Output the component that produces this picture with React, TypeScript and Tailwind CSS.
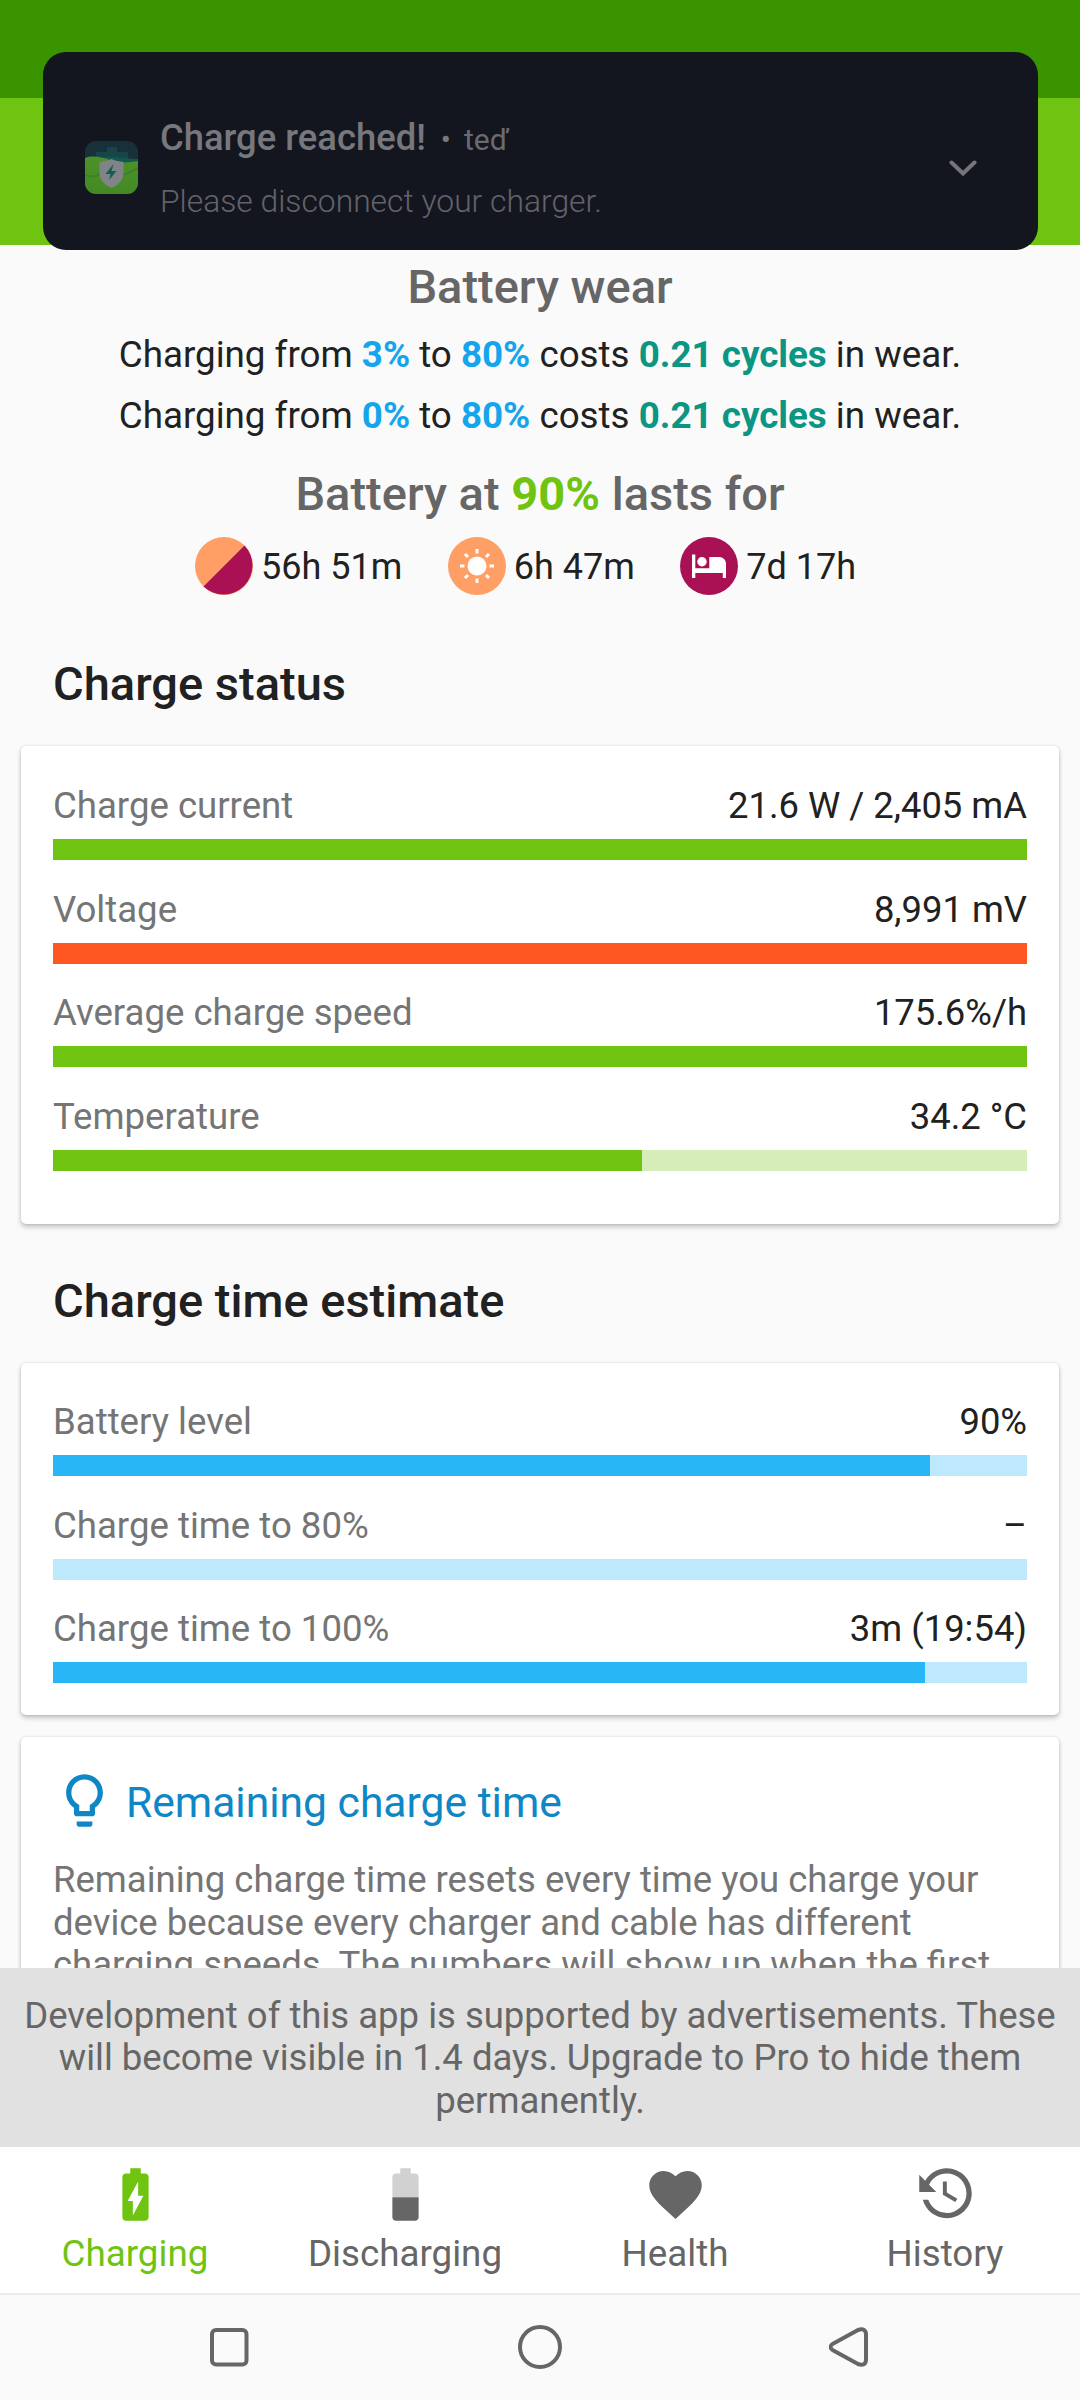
import type { ReactNode } from "react";
import { MdBattery50, MdBatteryChargingFull, MdFavorite, MdLightbulbOutline } from "react-icons/md";

type Stat = {
  label: string;
  value: string;
  percent: number;
  fill: string;
  track: string;
};

const GREEN = { fill: "bg-[#6fc411]", track: "bg-[#d4edb9]" };
const ORANGE = { fill: "bg-[#ff5722]", track: "bg-[#ffccbc]" };
const BLUE = { fill: "bg-[#29b6f6]", track: "bg-[#bee8fb]" };

const chargeStatus: Stat[] = [
  { label: "Charge current", value: "21.6 W / 2,405 mA", percent: 100, ...GREEN },
  { label: "Voltage", value: "8,991 mV", percent: 100, ...ORANGE },
  { label: "Average charge speed", value: "175.6%/h", percent: 100, ...GREEN },
  { label: "Temperature", value: "34.2 °C", percent: 60.5, ...GREEN },
];

const chargeTime: Stat[] = [
  { label: "Battery level", value: "90%", percent: 90, ...BLUE },
  { label: "Charge time to 80%", value: "–", percent: 0, ...BLUE },
  { label: "Charge time to 100%", value: "3m (19:54)", percent: 89.5, ...BLUE },
];

function StatRow({ stat }: { stat: Stat }) {
  return (
    <div>
      <div className="flex justify-between leading-[42px]">
        <span className="text-[36.6px] text-[#757575]">{stat.label}</span>
        <span className="text-[36.4px] text-[#212121]">{stat.value}</span>
      </div>
      <div className={`mt-3 h-[21px] ${stat.track}`}>
        <div className={`h-full ${stat.fill}`} style={{ width: `${stat.percent}%` }} />
      </div>
    </div>
  );
}

function Card({ className, children }: { className: string; children: ReactNode }) {
  return (
    <div
      className={`mx-[21px] rounded-[5px] bg-white px-8 shadow-[0_3px_5px_rgba(0,0,0,0.22),0_0_3px_rgba(0,0,0,0.12)] ${className}`}
    >
      {children}
    </div>
  );
}

function WearLine({ from }: { from: string }) {
  return (
    <p className="text-center text-[36.75px] leading-[42px] text-[#212121]">
      Charging from <b className="font-bold text-[#14a5ec]">{from}</b> to{" "}
      <b className="font-bold text-[#14a5ec]">80%</b> costs{" "}
      <b className="font-bold text-[#0b9583]">0.21 cycles</b> in wear.
    </p>
  );
}

function AppIcon() {
  return (
    <svg className="h-[53px] w-[53px]" viewBox="0 0 53 53">
      <defs>
        <clipPath id="appShape">
          <rect width="53" height="53" rx="11" />
        </clipPath>
        <linearGradient id="appGreen" x1="0" y1="0" x2="0" y2="1">
          <stop offset="0" stopColor="#4c9128" />
          <stop offset="1" stopColor="#448a24" />
        </linearGradient>
      </defs>
      <g clipPath="url(#appShape)">
        <rect width="53" height="53" fill="#18303a" />
        <path d="M11 22V11h11V6h10v5h11v12H11z" fill="#17454a" />
        <path d="M20 16c10-1 20 2 33 2v6H16z" fill="#12594d" />
        <path d="M0 17c8-3 16-1 25 2 9 3 18 3 28 1v33H0z" fill="url(#appGreen)" />
        <path d="M0 34c8 4 13-1 18-1M36 33c6 1 10-2 17-6" stroke="#3d8225" strokeWidth="2" fill="none" />
        <path d="M26.500 18c-4 2-8 2-12 3v11c0 7 5 12 12 15 7-3 12-8 12-15V21c-4-1-8-1-12-3z" fill="#808487" />
        <path d="M28.500 23l-8 10h5l-1.500 6 7.500-9h-5z" fill="#155b58" />
      </g>
    </svg>
  );
}

function Notification() {
  return (
    <div className="absolute top-[52px] left-[43px] flex h-[197.500px] w-[995px] rounded-[23px] bg-[#14161f] pl-[42px]">
      <div className="pt-[89px]">
        <AppIcon />
      </div>
      <div className="ml-[22px] grow">
        <div className="mt-[65px] flex items-baseline leading-[42px]">
          <span className="text-[36.4px] font-medium text-[#77787d]">Charge reached!</span>
          <span className="ml-[15px] text-[30px] text-[#77787d]">•</span>
          <span className="ml-[13px] text-[30px] text-[#6a6b71]">teď</span>
        </div>
        <p className="mt-[21px] text-[31.8px] leading-[38px] font-light text-[#62636a]">
          Please disconnect your charger.
        </p>
      </div>
      <svg
        className="mt-[108px] mr-[61px] h-4 w-7"
        viewBox="0 0 28 16"
        fill="none"
        stroke="#75767b"
        strokeWidth="4"
        strokeLinecap="round"
      >
        <path d="M2.500 2.500L14 13.500L25.500 2.500" />
      </svg>
    </div>
  );
}

function CombinedIcon() {
  return (
    <svg className="h-[58px] w-[58px]" viewBox="0 0 58 58">
      <circle cx="29" cy="29" r="29" fill="#ff9e65" />
      <path d="M49.500 8.500A29 29 0 0 1 8.500 49.500z" fill="#aa1155" />
    </svg>
  );
}

function SunIcon() {
  return (
    <svg className="h-[58px] w-[58px]" viewBox="0 0 58 58">
      <circle cx="29" cy="29" r="29" fill="#ff9e65" />
      <circle cx="29" cy="29" r="9.500" fill="#fff" />
      <path
        d="M29 12v4.500M29 41.500V46M12 29h4.500M41.500 29H46M17 17l3 3M38 38l3 3M41 17l-3 3M20 38l-3 3"
        stroke="#fff"
        strokeWidth="3"
      />
    </svg>
  );
}

function BedIcon() {
  return (
    <svg className="h-[58px] w-[58px]" viewBox="0 0 58 58">
      <circle cx="29" cy="29" r="29" fill="#aa1155" />
      <path d="M12 17.500h3.300v13.700h14V20h10.200a6.500 6.500 0 0 1 6.500 6.500V41h-3.200v-5H15.300v5H12z" fill="#fff" />
      <circle cx="22" cy="24.800" r="4.700" fill="#fff" />
    </svg>
  );
}

function HistoryIcon() {
  return (
    <svg className="h-[63px] w-[63px]" viewBox="0 0 24 24" fill="currentColor">
      <path d="M11 7v5.110l4.710 2.790.79-1.280-4-2.370V7m0-5C8.970 2 5.910 3.920 4.270 6.770L2 4.500V11h6.500L5.750 8.250C6.960 5.730 9.500 4 12.500 4a7.500 7.500 0 0 1 7.500 7.500 7.500 7.500 0 0 1-7.500 7.500c-3.270 0-6.030-2.090-7.060-5h-2.100c1.100 4.030 4.770 7 9.160 7 5.240 0 9.500-4.250 9.500-9.500A9.500 9.500 0 0 0 12.500 2z" />
    </svg>
  );
}

const durations = [
  { icon: <CombinedIcon />, text: "56h 51m" },
  { icon: <SunIcon />, text: "6h 47m" },
  { icon: <BedIcon />, text: "7d 17h" },
];

const tabs = [
  { label: "Charging", icon: <MdBatteryChargingFull size={63} />, color: "text-[#6fc411]" },
  { label: "Discharging", icon: <MdBattery50 size={63} />, color: "text-[#666666]" },
  { label: "Health", icon: <MdFavorite size={63} />, color: "text-[#666666]" },
  { label: "History", icon: <HistoryIcon />, color: "text-[#666666]" },
];

export default function App() {
  return (
    <div className="relative flex h-[2400px] w-[1080px] flex-col overflow-hidden bg-[#fafafa] font-['Roboto',sans-serif] text-[36px]">
      {/* Status bar and toolbar */}
      <div className="h-[98px] shrink-0 bg-[#399400]" />
      <div className="h-[147px] shrink-0 bg-[#6fc411]" />

      <main className="h-[1722.500px] shrink-0 overflow-hidden pt-[15px]">
        <h2 className="text-center text-[47px] leading-[54px] font-medium text-[#666666]">
          Battery wear
        </h2>
        <div className="mt-5 flex flex-col gap-[19px]">
          <WearLine from="3%" />
          <WearLine from="0%" />
        </div>

        <h2 className="mt-[30px] text-center text-[47px] leading-[54px] font-medium text-[#666666]">
          Battery at <span className="font-bold text-[#6fc411]">90%</span> lasts for
        </h2>
        <div className="mt-4 flex gap-[45.500px] pl-[195px]">
          {durations.map((d) => (
            <div key={d.text} className="flex items-center gap-2 text-[#212121]">
              {d.icon}
              <span className="pt-[2px] leading-[42px]">{d.text}</span>
            </div>
          ))}
        </div>

        {/* Charge status */}
        <h2 className="mt-[62px] pl-[53px] text-[47px] leading-[54px] font-medium text-[#212121]">
          Charge status
        </h2>
        <Card className="mt-[35px] flex flex-col gap-[28.500px] pt-[39px] pb-[53.500px]">
          {chargeStatus.map((stat) => (
            <StatRow key={stat.label} stat={stat} />
          ))}
        </Card>

        {/* Charge time estimate */}
        <h2 className="mt-[50px] pl-[53px] text-[47px] leading-[54px] font-medium text-[#212121]">
          Charge time estimate
        </h2>
        <Card className="mt-[35px] flex flex-col gap-[28.500px] pt-[38px] pb-[32px]">
          {chargeTime.map((stat) => (
            <StatRow key={stat.label} stat={stat} />
          ))}
        </Card>

        <Card className="mt-[22px] h-[400px] pt-8">
          <div className="flex items-center text-[#0f86c5]">
            <MdLightbulbOutline size={63} />
            <span className="ml-[10px] pt-[3px] text-[42.6px] leading-[50px]">
              Remaining charge time
            </span>
          </div>
          <p className="mt-[27px] text-[36.5px] leading-[42.700px] text-[#757575]">
            Remaining charge time resets every time you charge your
            <br />
            device because every charger and cable has different
            <br />
            charging speeds. The numbers will show up when the first
          </p>
        </Card>
      </main>

      {/* Ad notice */}
      <div className="h-[179.500px] shrink-0 bg-[#e1e1e1] pt-[27px] text-center text-[36.5px] leading-[42.700px] text-[#666666]">
        Development of this app is supported by advertisements. These
        <br />
        will become visible in 1.4 days. Upgrade to Pro to hide them
        <br />
        permanently.
      </div>

      <nav className="grid h-[148px] shrink-0 grid-cols-4 border-b-2 border-[#ebebeb] bg-white pt-4">
        {tabs.map((tab) => (
          <div key={tab.label} className={`flex flex-col items-center ${tab.color}`}>
            {tab.icon}
            <span className="mt-[7px] text-[36.75px] leading-[42px]">{tab.label}</span>
          </div>
        ))}
      </nav>

      {/* System navigation */}
      <div className="flex grow items-center justify-between pr-[211px] pl-[209px] pb-[1px]">
        <svg className="h-10 w-10" viewBox="0 0 40 40" fill="none" stroke="#666" strokeWidth="4">
          <rect x="3" y="3" width="34.500" height="34.500" rx="4" />
        </svg>
        <svg className="h-[46px] w-[46px]" viewBox="0 0 46 46" fill="none" stroke="#666" strokeWidth="4">
          <circle cx="24" cy="23" r="20" />
        </svg>
        <svg
          className="h-[42px] w-10"
          viewBox="0 0 40 42"
          fill="none"
          stroke="#666"
          strokeWidth="4"
          strokeLinejoin="round"
        >
          <path d="M3.500 18L29 4Q36.500 1.500 37 8V34Q36.500 40.500 29 38L3.500 24Q-.5 21 3.500 18z" />
        </svg>
      </div>

      <Notification />
    </div>
  );
}
